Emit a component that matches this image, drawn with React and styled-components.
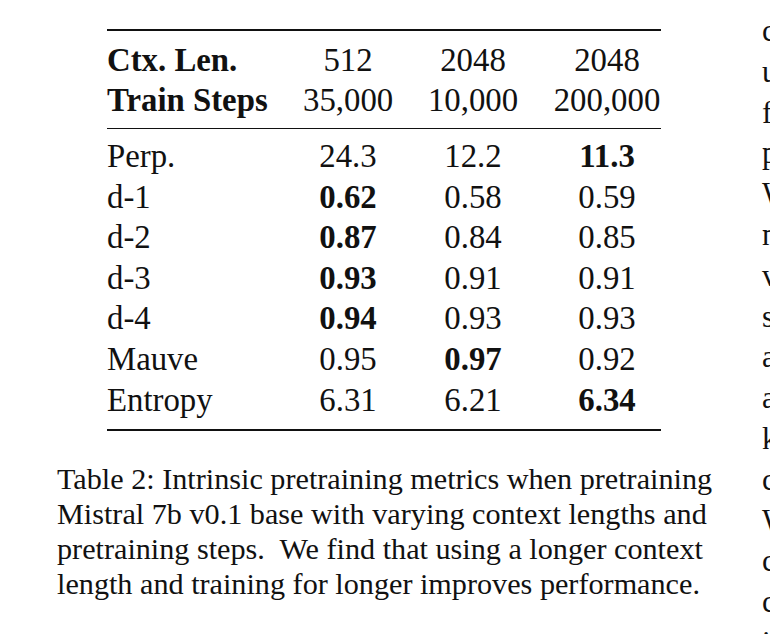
import styled, { createGlobalStyle } from "styled-components";

const GlobalStyle = createGlobalStyle`
  html, body {
    margin: 0;
    padding: 0;
    background: #fff;
    overflow: hidden;
  }
  body {
    font-family: "Liberation Serif", "Times New Roman", serif;
    color: #111;
  }
`;

const Page = styled.div`
  display: flex;
  width: 770px;
  height: 634px;
  overflow: hidden;
`;

const LeftColumn = styled.div`
  width: 762px;
  flex-shrink: 0;
  display: flex;
  flex-direction: column;
`;

const TableBox = styled.div`
  margin: 29px 0 0 107px;
  width: 554px;
  font-size: 32.8px;
`;

const Section = styled.div`
  display: grid;
  grid-template-columns: 196px 90px 160px 108px;
  grid-auto-rows: 40.6px;
  align-items: center;
  padding: ${(p) => p.$pad};
  border-top: ${(p) => p.$top || "none"};
  border-bottom: ${(p) => p.$bottom || "none"};
`;

const Label = styled.div`
  white-space: nowrap;
  font-weight: ${(p) => (p.$bold ? 700 : 400)};
`;

const Cell = styled.div`
  text-align: center;
  white-space: nowrap;
  font-weight: ${(p) => (p.$bold ? 700 : 400)};
`;

const Caption = styled.div`
  margin: 31px 0 0 57px;
  font-size: 30.2px;
  line-height: 35px;
`;

const CaptionLine = styled.div`
  white-space: pre;
`;

const RightColumn = styled.div`
  flex-shrink: 0;
  padding-top: 11px;
  font-size: 31px;
  line-height: 40.8px;
`;

const SideLine = styled.div`
  white-space: nowrap;
`;

const header = [
  ["Ctx. Len.", "512", "2048", "2048"],
  ["Train Steps", "35,000", "10,000", "200,000"],
];

// [label, values, index of bold value]
const rows = [
  ["Perp.", ["24.3", "12.2", "11.3"], 2],
  ["d-1", ["0.62", "0.58", "0.59"], 0],
  ["d-2", ["0.87", "0.84", "0.85"], 0],
  ["d-3", ["0.93", "0.91", "0.91"], 0],
  ["d-4", ["0.94", "0.93", "0.93"], 0],
  ["Mauve", ["0.95", "0.97", "0.92"], 1],
  ["Entropy", ["6.31", "6.21", "6.34"], 2],
];

const caption = [
  "Table 2: Intrinsic pretraining metrics when pretraining",
  "Mistral 7b v0.1 base with varying context lengths and",
  "pretraining steps.  We find that using a longer context",
  "length and training for longer improves performance.",
];

const side = ["c", "u", "f", "p", "W", "n", "v", "s", "a", "a", "k", "c", "W", "c", "c", "i"];

export default function App() {
  return (
    <>
      <GlobalStyle />
      <Page>
        <LeftColumn>
          <TableBox>
            <Section $pad="9px 0 7px" $top="2.5px solid #111" $bottom="1.6px solid #111">
              {header.map((r) => [
                <Label key={r[0]} $bold>{r[0]}</Label>,
                ...r.slice(1).map((v, i) => <Cell key={r[0] + i}>{v}</Cell>),
              ])}
            </Section>
            <Section $pad="7px 0 9px" $bottom="2.5px solid #111">
              {rows.map(([label, vals, b]) => [
                <Label key={label}>{label}</Label>,
                ...vals.map((v, i) => (
                  <Cell key={label + i} $bold={i === b}>{v}</Cell>
                )),
              ])}
            </Section>
          </TableBox>
          <Caption>
            {caption.map((l) => (
              <CaptionLine key={l}>{l}</CaptionLine>
            ))}
          </Caption>
        </LeftColumn>
        <RightColumn>
          {side.map((c, i) => (
            <SideLine key={i}>{c}</SideLine>
          ))}
        </RightColumn>
      </Page>
    </>
  );
}
